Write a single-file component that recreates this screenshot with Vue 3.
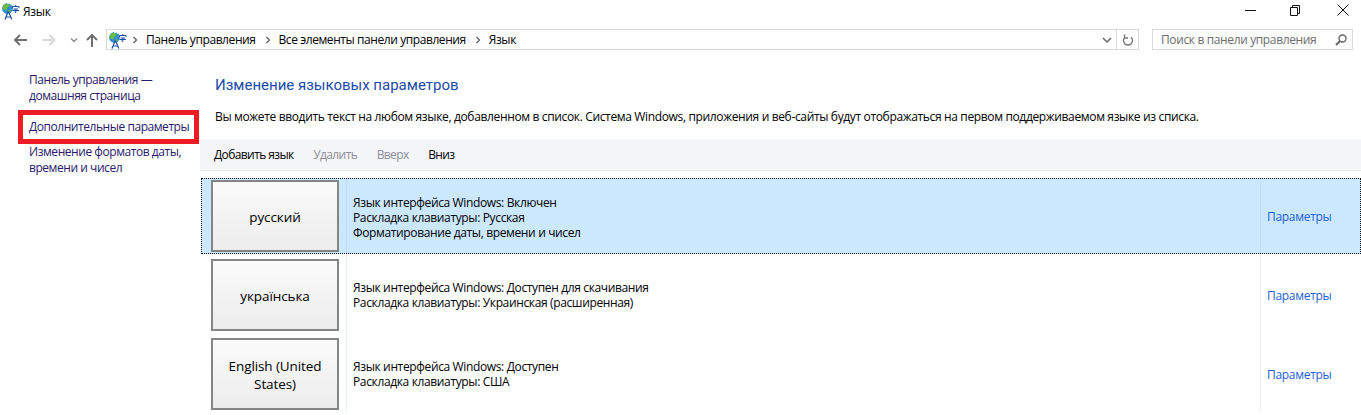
<template>
  <div class="window">
    <div class="titlebar">
      <svg class="lang-icon" viewBox="0 0 18 18" width="18" height="18">
        <circle cx="5.500" cy="6.500" r="5.400" fill="#2f8fd0" />
        <path d="M2.500 2.500c1.500-1.200 3.500-1 4.500 0s.5 2-.8 2.600-.7 2.400-1.700 2.900S.8 7.500.8 6 1.500 3.300 2.500 2.500z" fill="#6fbb3f" />
        <path d="M6.500 8l2.500.5-.8 2.500-1.700.5z" fill="#6fbb3f" />
        <path d="M5 1.600c1.500-.4 3 0 4 1" fill="none" stroke="#d8f0f8" stroke-width="1" />
        <path d="M10.500 4.500h6.500M13.700 3v1.500M10.500 4.500v1.500M17 4.500v1.500M11.500 7h4.500M13.800 7v3.500l-1.300-.5M10.500 8.500h6.500" fill="none" stroke="#1c4ea6" stroke-width="1" />
        <path d="M3 17.500l3-7.500h.8l3 7.500M4.300 15h5" fill="none" stroke="#1c4ea6" stroke-width="1.200" />
      </svg>
      <span class="title">Язык</span>
      <div class="win-buttons">
        <svg viewBox="0 0 46 22" width="46" height="22"><path d="M22 10.500h11" stroke="#111" fill="none" /></svg>
        <svg viewBox="0 0 46 22" width="46" height="22"><path d="M21.500 7.500h7v8h-7zM23.500 7.500v-2h7v8h-2" stroke="#111" fill="none" /></svg>
        <svg viewBox="0 0 46 22" width="46" height="22"><path d="M22.500 4.500l11 11M33.500 4.500l-11 11" stroke="#111" fill="none" /></svg>
      </div>
    </div>

    <div class="navbar">
      <div class="nav-buttons">
        <svg viewBox="0 0 16 16" width="16" height="16"><path d="M15 8H3M8 3L3 8l5 5" fill="none" stroke="#6f6f6f" stroke-width="2" /></svg>
        <svg viewBox="0 0 16 16" width="16" height="16"><path d="M2 8h12M8.500 3l5 5-5 5" fill="none" stroke="#d8d8d8" stroke-width="2" /></svg>
        <svg viewBox="0 0 8 8" width="8" height="8"><path d="M1 2.500l3 3 3-3" fill="none" stroke="#8c8c8c" stroke-width="1.400" /></svg>
        <svg class="up" viewBox="0 0 16 16" width="16" height="16"><path d="M8 15V3M3 8l5-5 5 5" fill="none" stroke="#6f6f6f" stroke-width="2" /></svg>
      </div>
      <div class="address">
        <svg class="lang-icon addr-icon" viewBox="0 0 18 18" width="18" height="18">
          <circle cx="5.500" cy="6.500" r="5.400" fill="#2f8fd0" />
          <path d="M2.500 2.500c1.500-1.200 3.500-1 4.500 0s.5 2-.8 2.600-.7 2.400-1.700 2.900S.8 7.500.8 6 1.500 3.300 2.500 2.500z" fill="#6fbb3f" />
          <path d="M6.500 8l2.500.5-.8 2.500-1.700.5z" fill="#6fbb3f" />
          <path d="M5 1.600c1.500-.4 3 0 4 1" fill="none" stroke="#d8f0f8" stroke-width="1" />
          <path d="M10.500 4.500h6.500M13.700 3v1.500M10.500 4.500v1.500M17 4.500v1.500M11.500 7h4.500M13.800 7v3.500l-1.300-.5M10.500 8.500h6.500" fill="none" stroke="#1c4ea6" stroke-width="1" />
          <path d="M3 17.500l3-7.500h.8l3 7.500M4.300 15h5" fill="none" stroke="#1c4ea6" stroke-width="1.200" />
        </svg>
        <template v-for="crumb in crumbs" :key="crumb">
          <svg class="chev" viewBox="0 0 6 8" width="6" height="8"><path d="M1.500 1l3 3-3 3" fill="none" stroke="#666" stroke-width="1.400" /></svg>
          <span class="crumb">{{ crumb }}</span>
        </template>
        <div class="address-end">
          <svg viewBox="0 0 10 8" width="10" height="8"><path d="M1 2l4 4 4-4" fill="none" stroke="#666" stroke-width="1.500" /></svg>
          <span class="address-sep"></span>
          <svg viewBox="0 0 14 14" width="14" height="14"><path d="M4 4.200a4.500 4.500 0 1 0 6 0M3.500 1.500V5H7" fill="none" stroke="#777" stroke-width="1.400" /></svg>
        </div>
      </div>
      <div class="search">
        <span>Поиск в панели управления</span>
        <svg viewBox="0 0 14 14" width="14" height="14"><circle cx="8.500" cy="5.500" r="3.500" fill="none" stroke="#666" stroke-width="1.400" /><path d="M6 8l-4 4" stroke="#666" stroke-width="2" /></svg>
      </div>
    </div>

    <div class="content">
      <aside class="sidebar">
        <a class="side-link first">Панель управления —<br />домашняя страница</a>
        <a class="side-link marked">Дополнительные параметры</a>
        <a class="side-link">Изменение форматов даты,<br />времени и чисел</a>
      </aside>
      <main class="main">
        <h1>Изменение языковых параметров</h1>
        <p class="desc">Вы можете вводить текст на любом языке, добавленном в список. Система Windows, приложения и веб-сайты будут отображаться на первом поддерживаемом языке из списка.</p>
        <div class="toolbar">
          <span v-for="btn in tools" :key="btn.label" :class="{ off: btn.off }">{{ btn.label }}</span>
        </div>
        <div class="list">
          <div v-for="lang in languages" :key="lang.name" class="row" :class="{ selected: lang.selected }">
            <div class="lang-cell"><button class="lang-btn">{{ lang.name }}</button></div>
            <div class="info">
              <div v-for="line in lang.lines" :key="line">{{ line }}</div>
            </div>
            <div class="options"><a>Параметры</a></div>
          </div>
        </div>
      </main>
    </div>
  </div>
</template>

<script setup>
const crumbs = ['Панель управления', 'Все элементы панели управления', 'Язык']

const tools = [
  { label: 'Добавить язык' },
  { label: 'Удалить', off: true },
  { label: 'Вверх', off: true },
  { label: 'Вниз' }
]

const languages = [
  {
    name: 'русский',
    selected: true,
    lines: ['Язык интерфейса Windows: Включен', 'Раскладка клавиатуры: Русская', 'Форматирование даты, времени и чисел']
  },
  {
    name: 'українська',
    lines: ['Язык интерфейса Windows: Доступен для скачивания', 'Раскладка клавиатуры: Украинская (расширенная)']
  },
  {
    name: 'English (United States)',
    lines: ['Язык интерфейса Windows: Доступен', 'Раскладка клавиатуры: США']
  }
]
</script>

<style>
html, body {
  background: #fff;
  overflow: hidden;
}
</style>

<style scoped>
.window {
  width: 1361px;
  height: 415px;
  overflow: hidden;
  font-family: "Open Sans", "Noto Sans", sans-serif;
  font-size: 12px;
  color: #000;
}

.titlebar {
  display: flex;
  align-items: center;
  height: 22px;
  padding-left: 2px;
}

.title {
  margin-left: 3px;
  letter-spacing: -0.3px;
}

.win-buttons {
  display: flex;
  margin-left: auto;
}

.navbar {
  display: flex;
  align-items: center;
  height: 21px;
  margin-top: 7px;
}

.nav-buttons {
  display: flex;
  align-items: center;
  gap: 13px;
  width: 106px;
  padding-left: 12px;
  box-sizing: border-box;
}

.up {
  margin-left: -7px;
}

.address {
  display: flex;
  align-items: center;
  width: 1033px;
  height: 21px;
  box-sizing: border-box;
  border: 1px solid #d9d9d9;
  padding-left: 2px;
}

.addr-icon {
  margin-right: -4px;
}

.chev {
  margin: 0 8px 0 9px;
}

.crumb {
  letter-spacing: -0.42px;
}

.address-end {
  display: flex;
  align-items: center;
  margin-left: auto;
  padding-right: 3px;
}

.address-sep {
  width: 1px;
  height: 19px;
  background: #d9d9d9;
  margin: 0 4px 0 4px;
}

.search {
  display: flex;
  align-items: center;
  justify-content: space-between;
  width: 201px;
  height: 21px;
  box-sizing: border-box;
  margin-left: 13px;
  border: 1px solid #d9d9d9;
  padding: 0 4px 0 8px;
  color: #6d6d6d;
  letter-spacing: -0.37px;
}

.content {
  display: flex;
}

.sidebar {
  display: flex;
  flex-direction: column;
  width: 200px;
  padding-left: 29px;
  box-sizing: border-box;
}

.side-link {
  color: #2a1a6b;
  line-height: 15.500px;
  letter-spacing: -0.45px;
}

.first {
  margin-top: 22px;
}

.marked {
  width: 181px;
  height: 34px;
  box-sizing: border-box;
  margin: 7px 0 0 -11px;
  padding: 4px 0 4px 6px;
  border: 5px solid #ed1c24;
  line-height: 16px;
  white-space: nowrap;
}

.main {
  flex: 1;
  padding-top: 25px;
  min-width: 0;
}

h1 {
  margin: 0 0 0 15px;
  font-family: Roboto, "Open Sans", sans-serif;
  font-size: 15px;
  font-weight: 400;
  line-height: 20px;
  color: #1a4ba8;
}

.desc {
  margin: 14px 0 0 15px;
  line-height: 16px;
  letter-spacing: -0.35px;
  white-space: nowrap;
}

.toolbar {
  display: flex;
  align-items: center;
  gap: 19.500px;
  height: 31px;
  margin-top: 14px;
  padding-left: 14px;
  background: #f4f5f7;
  border-bottom: 1px solid #e6e7e9;
  letter-spacing: -0.6px;
}

.off {
  color: #8e8e9c;
}

.list {
  display: flex;
  flex-direction: column;
  gap: 3px;
  margin-top: 7px;
  margin-left: 1px;
  background-image: linear-gradient(#e5f1fb, #e5f1fb), linear-gradient(#e5f1fb, #e5f1fb);
  background-size: 1px 100%;
  background-position: 145px 0, 1059px 0;
  background-repeat: no-repeat;
}

.row {
  display: grid;
  grid-template-columns: 144px 914px 1fr;
  height: 76px;
  box-sizing: border-box;
  border: 1px solid transparent;
}

.selected {
  background: #cce8ff;
  border: 1px dotted #111;
}

.info,
.options {
  border-left: 1px solid transparent;
}

.selected .info,
.selected .options {
  border-left-color: #c0dffc;
}

.lang-cell {
  display: flex;
  align-items: center;
  padding-left: 9px;
}

.lang-btn {
  width: 128px;
  height: 72px;
  box-sizing: border-box;
  border: 2px solid #858585;
  background: linear-gradient(#fbfbfb, #ececec);
  font-family: inherit;
  font-size: 13.500px;
  color: #000;
  padding: 2px 8px 0;
  letter-spacing: -0.1px;
}

.info {
  display: flex;
  flex-direction: column;
  justify-content: center;
  padding-left: 6px;
  line-height: 15px;
  letter-spacing: -0.36px;
}

.selected .info {
  padding-top: 2px;
}

.options {
  display: flex;
  align-items: center;
  padding-left: 6px;
}

.options a {
  color: #1c5fd8;
  letter-spacing: -0.3px;
}
</style>
